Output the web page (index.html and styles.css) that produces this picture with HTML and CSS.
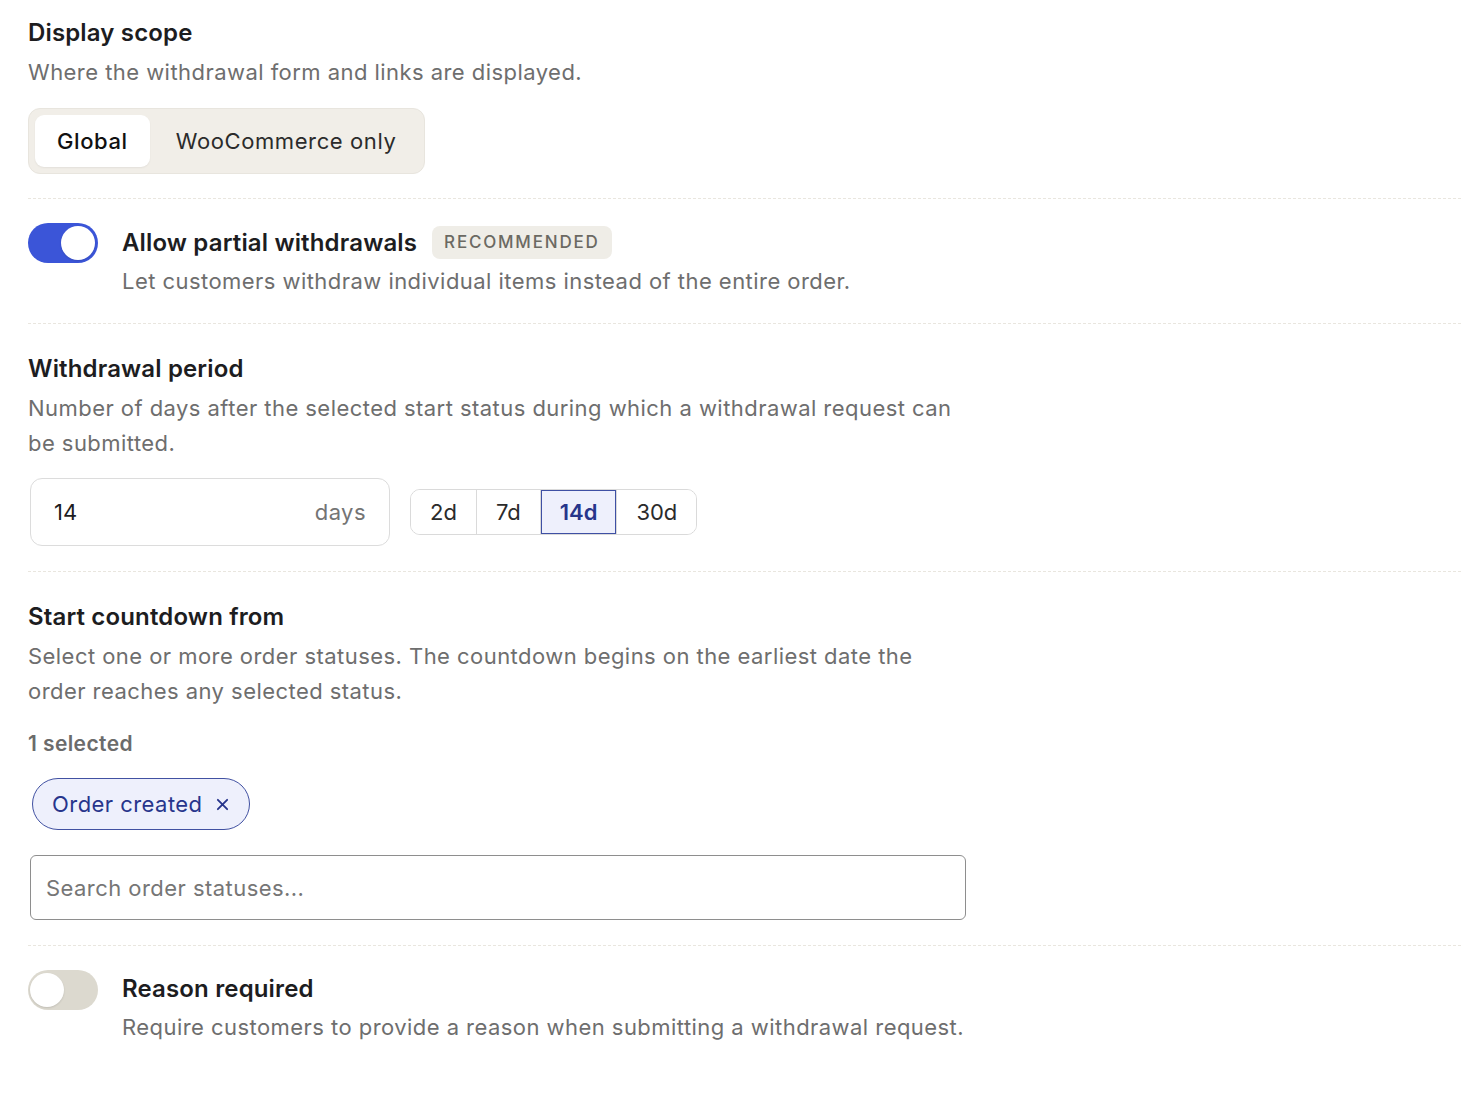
FILE: index.html
```html
<!DOCTYPE html>
<html lang="en">
<head>
    <meta charset="UTF-8">
    <meta name="viewport" content="width=device-width, initial-scale=1.0">
    <title>Withdrawal settings</title>
    <link rel="stylesheet" href="styles.css">
</head>
<body>
    <div class="settings">

        <!-- Display scope -->
        <div class="section first">
            <div class="title">Display scope</div>
            <div class="desc">Where the withdrawal form and links are displayed.</div>
            <div class="segmented">
                <button class="segment active">Global</button>
                <button class="segment">WooCommerce only</button>
            </div>
        </div>

        <!-- Partial withdrawals -->
        <div class="section toggle-row">
            <button class="toggle on" aria-pressed="true"><span class="knob"></span></button>
            <div class="toggle-text">
                <div class="title">Allow partial withdrawals <span class="badge">Recommended</span></div>
                <div class="desc">Let customers withdraw individual items instead of the entire order.</div>
            </div>
        </div>

        <!-- Withdrawal period -->
        <div class="section">
            <div class="title">Withdrawal period</div>
            <div class="desc">Number of days after the selected start status during which a withdrawal request can be submitted.</div>
            <div class="period">
                <label class="days-input">
                    <input type="text" value="14">
                    <span class="suffix">days</span>
                </label>
                <div class="presets">
                    <button class="preset">2d</button>
                    <button class="preset">7d</button>
                    <button class="preset active">14d</button>
                    <button class="preset">30d</button>
                </div>
            </div>
        </div>

        <!-- Start countdown -->
        <div class="section">
            <div class="title">Start countdown from</div>
            <div class="desc">Select one or more order statuses. The countdown begins on the earliest date the order reaches any selected status.</div>
            <div class="count">1 selected</div>
            <div class="chips">
                <span class="chip">Order created
                    <svg class="chip-x" width="14" height="14" viewBox="0 0 14 14"><path d="M2 2L12 12M12 2L2 12" stroke="currentColor" stroke-width="2" stroke-linecap="round"/></svg>
                </span>
            </div>
            <input class="search" type="text" placeholder="Search order statuses...">
        </div>

        <!-- Reason required -->
        <div class="section toggle-row">
            <button class="toggle" aria-pressed="false"><span class="knob"></span></button>
            <div class="toggle-text">
                <div class="title">Reason required</div>
                <div class="desc">Require customers to provide a reason when submitting a withdrawal request.</div>
            </div>
        </div>

    </div>
</body>
</html>
```

FILE: styles.css
```css
body {
    margin: 0;
    padding: 0;
    background: #ffffff;
    font-family: Inter, "Noto Sans", sans-serif;
    letter-spacing: 0.45px;
    color: #1d1d1f;
}
.settings {
    padding: 0 0 40px 28px;
}
.section {
    padding: 29px 0 25px;
    border-top: 1px dashed #e9e6df;
}
.section.first {
    border-top: none;
    padding-top: 17px;
    padding-bottom: 24px;
}
.title {
    font-size: 24px;
    line-height: 32px;
    font-weight: 600;
    letter-spacing: 0.15px;
    color: #1d1d1f;
    display: flex;
    align-items: center;
}
.desc {
    margin-top: 6px;
    max-width: 940px;
    font-size: 22px;
    line-height: 35px;
    color: #6e6e6e;
}

/* segmented control */
.segmented {
    display: inline-flex;
    gap: 4px;
    margin-top: 18px;
    padding: 6px;
    background: #f1eee8;
    border: 1px solid #e8e5de;
    border-radius: 12px;
}
.segment {
    font-family: inherit;
    font-size: 22px;
    font-weight: 400;
    letter-spacing: 0.6px;
    height: 52px;
    padding: 0 22px;
    border: none;
    border-radius: 9px;
    background: transparent;
    color: #2b2b2b;
    cursor: pointer;
}
.segment.active {
    font-weight: 500;
    background: #ffffff;
    color: #111111;
    box-shadow: 0 1px 2px rgba(0,0,0,0.06);
}

/* toggles */
.toggle-row {
    display: flex;
    align-items: flex-start;
    gap: 24px;
    padding-top: 24px;
    padding-bottom: 24px;
}
.toggle {
    flex: none;
    position: relative;
    width: 70px;
    height: 40px;
    padding: 0;
    border: none;
    border-radius: 20px;
    background: #dcd9cf;
    cursor: pointer;
}
.toggle .knob {
    position: absolute;
    top: 3px;
    left: 2px;
    width: 34px;
    height: 34px;
    border-radius: 50%;
    background: #ffffff;
    box-shadow: 0 1px 2px rgba(0,0,0,0.12);
}
.toggle.on {
    background: #3b55d8;
}
.toggle.on .knob {
    left: auto;
    right: 3px;
}
.toggle-text {
    padding-top: 3px;
}
.toggle-text .desc {
    margin-top: 5px;
}
.badge {
    margin-left: 15px;
    padding: 0 12px;
    height: 33px;
    line-height: 33px;
    border-radius: 8px;
    background: #efede7;
    color: #6b6962;
    font-size: 17px;
    font-weight: 500;
    letter-spacing: 1.8px;
    text-transform: uppercase;
}

/* withdrawal period */
.period {
    display: flex;
    align-items: center;
    gap: 20px;
    margin-top: 17px;
    margin-left: 2px;
}
.days-input {
    display: flex;
    align-items: center;
    box-sizing: border-box;
    width: 360px;
    height: 68px;
    padding: 0 23px;
    border: 1px solid #dcdcdc;
    border-radius: 12px;
}
.days-input input {
    flex: 1;
    min-width: 0;
    border: none;
    outline: none;
    padding: 0;
    font-family: inherit;
    font-size: 22px;
    color: #1d1d1f;
}
.suffix {
    font-size: 22px;
    color: #747474;
}
.presets {
    display: flex;
    border: 1px solid #dadada;
    border-radius: 10px;
    overflow: hidden;
}
.preset {
    font-family: inherit;
    font-size: 22px;
    height: 44px;
    padding: 0 19px;
    border: none;
    border-left: 1px solid #dadada;
    background: #ffffff;
    color: #2b2b2b;
    cursor: pointer;
}
.preset:first-child {
    border-left: none;
}
.preset.active {
    background: #eef0fc;
    color: #26358b;
    font-weight: 600;
    box-shadow: inset 0 0 0 1px #3e50a4;
}

/* order statuses */
.count {
    margin-top: 21px;
    font-size: 21px;
    line-height: 28px;
    font-weight: 600;
    letter-spacing: 0.4px;
    color: #6b6b6b;
}
.chips {
    margin-top: 20px;
    margin-left: 4px;
    display: flex;
}
.chip {
    display: inline-flex;
    align-items: center;
    gap: 13px;
    box-sizing: border-box;
    height: 52px;
    padding: 0 20px 0 19px;
    border: 1px solid #4151a2;
    border-radius: 26px;
    background: #eef0fc;
    color: #27358c;
    font-size: 22px;
}
.chip-x {
    width: 13px;
    height: 13px;
}
.search {
    display: block;
    box-sizing: border-box;
    margin-top: 25px;
    margin-left: 2px;
    width: 936px;
    height: 65px;
    padding: 0 15px;
    border: 1px solid #8e8e8e;
    border-radius: 6px;
    font-family: inherit;
    font-size: 22px;
    letter-spacing: 0.45px;
    color: #1d1d1f;
    outline: none;
}
.search::placeholder {
    color: #767676;
}
```
